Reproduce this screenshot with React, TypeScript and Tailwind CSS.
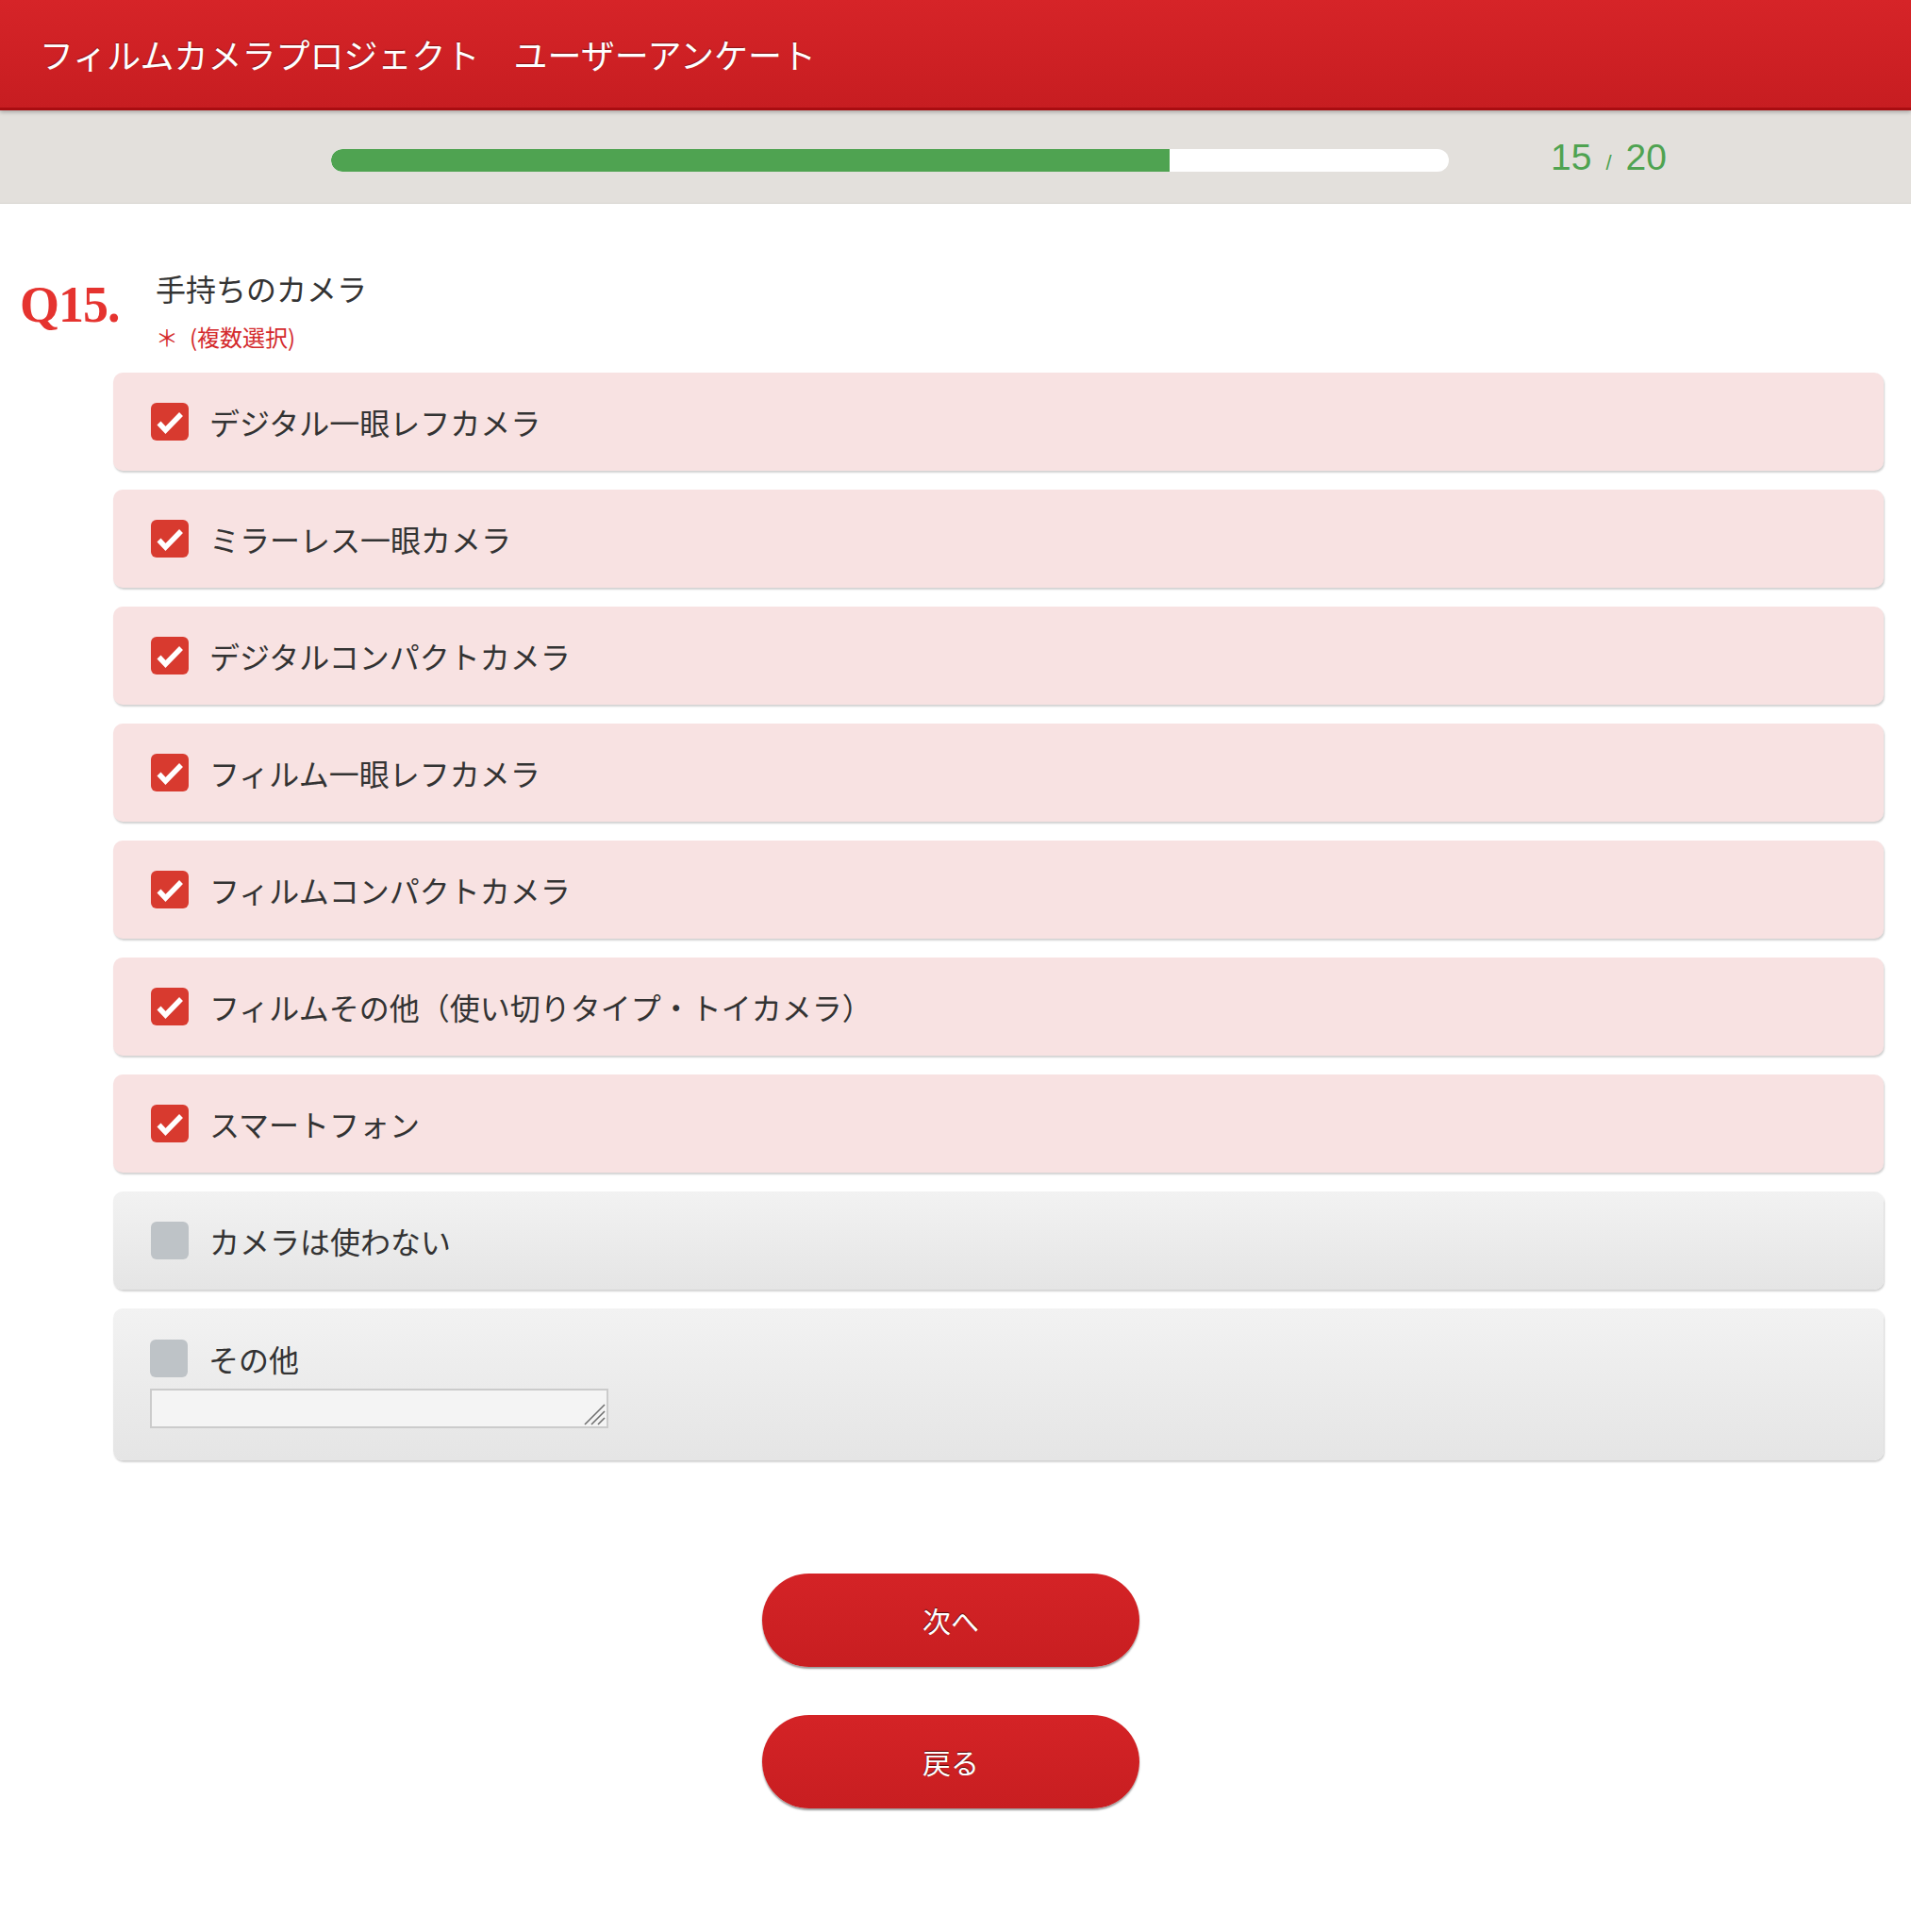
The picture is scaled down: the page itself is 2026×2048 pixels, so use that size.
import React from "react";

const JP = "font-['Noto_Sans_CJK_JP',sans-serif]";

function Check() {
  return (
    <div className="w-[40px] h-[40px] rounded-[6px] bg-[#d83a2f] flex items-center justify-center shrink-0">
      <svg width="40" height="40" viewBox="0 0 40 40">
        <polyline
          points="8.5,21.5 15.5,29 32,12"
          fill="none"
          stroke="#ffffff"
          strokeWidth="5.5"
          strokeLinecap="butt"
          strokeLinejoin="miter"
        />
      </svg>
    </div>
  );
}

function Empty() {
  return <div className="w-[40px] h-[40px] rounded-[6px] bg-[#bec3c7] shrink-0" />;
}

const checked = [
  "デジタル一眼レフカメラ",
  "ミラーレス一眼カメラ",
  "デジタルコンパクトカメラ",
  "フィルム一眼レフカメラ",
  "フィルムコンパクトカメラ",
  "フィルムその他（使い切りタイプ・トイカメラ）",
  "スマートフォン",
];

export default function App() {
  return (
    <div className={`w-[2026px] min-h-[2048px] bg-white ${JP}`}>
      {/* Header */}
      <div className="relative z-10 h-[117px] bg-gradient-to-b from-[#d62428] to-[#c71d21] border-b-[3px] border-[#a90d11] shadow-[0_2px_4px_rgba(0,0,0,0.25)] flex items-center pl-[42px]">
        <h1 className="text-white text-[36px] font-normal [text-shadow:0_-1px_1px_rgba(0,0,0,0.35)] whitespace-pre">
          フィルムカメラプロジェクト　ユーザーアンケート
        </h1>
      </div>

      {/* Progress band */}
      <div className="h-[99px] bg-[#e3e0dc] border-b border-[#d6d3cf] flex items-center pt-[8px] pl-[351px]">
        <div className="w-[1185px] h-[24px] rounded-full bg-white overflow-hidden">
          <div className="h-full bg-[#4fa351] rounded-l-full" style={{ width: `${(15 / 20) * 100}%` }} />
        </div>
        <div className="ml-[108px] flex items-baseline text-[#4fa351] font-['Liberation_Sans',sans-serif] -mt-[8px]">
          <span className="text-[39px] leading-none">15</span>
          <span className="text-[22px] leading-none mx-[15px]">/</span>
          <span className="text-[39px] leading-none">20</span>
        </div>
      </div>

      {/* Question */}
      <div className="flex pl-[21px] pt-[69px]">
        <div className="w-[144px] mt-[11px] text-[54px] leading-[54px] font-bold text-[#e5332f] font-['Liberation_Serif',serif] tracking-[-1px]">
          Q15.
        </div>
        <div className="flex flex-col">
          <div className="text-[32px] leading-[40px] text-[#333333]">手持ちのカメラ</div>
          <div className="mt-[17px] text-[24px] leading-[30px] text-[#d42a2c] flex">
            <span>＊</span>
            <span className="ml-[12px]">(複数選択)</span>
          </div>
        </div>
      </div>

      {/* Options */}
      <div className="mt-[23px] pl-[120px] pr-[29px] flex flex-col gap-[20px]">
        {checked.map((t) => (
          <div
            key={t}
            className="h-[104px] rounded-[10px] bg-[#f8e2e2] shadow-[1px_2px_2px_rgba(0,0,0,0.18)] flex items-center pl-[40px] gap-[22px]"
          >
            <Check />
            <span className="text-[32px] text-[#333333]">{t}</span>
          </div>
        ))}
        <div className="h-[104px] rounded-[10px] bg-gradient-to-b from-[#f2f2f2] to-[#e5e5e5] shadow-[1px_2px_2px_rgba(0,0,0,0.18)] flex items-center pl-[40px] gap-[22px]">
          <Empty />
          <span className="text-[32px] text-[#333333]">カメラは使わない</span>
        </div>
        <div className="rounded-[10px] bg-gradient-to-b from-[#f2f2f2] to-[#e5e5e5] shadow-[1px_2px_2px_rgba(0,0,0,0.18)] flex flex-col pl-[39px] pt-[33px] pb-[34px]">
          <div className="flex items-center gap-[22px] h-[40px]">
            <Empty />
            <span className="text-[32px] leading-[40px] text-[#333333]">その他</span>
          </div>
          <div className="relative mt-[12px] w-[486px] h-[42px] border-2 border-[#cbcbcb] bg-[#f4f4f4]">
            <svg className="absolute right-[1px] bottom-[1px]" width="24" height="24" viewBox="0 0 24 24">
              <line x1="23" y1="2" x2="2" y2="23" stroke="#6f6f6f" strokeWidth="1.6" />
              <line x1="23" y1="9" x2="9" y2="23" stroke="#6f6f6f" strokeWidth="1.6" />
              <line x1="23" y1="16" x2="16" y2="23" stroke="#6f6f6f" strokeWidth="1.6" />
            </svg>
          </div>
        </div>
      </div>

      {/* Buttons */}
      <div className="mt-[120px] flex flex-col items-center gap-[51px] pr-[10px]">
        <button className="w-[400px] h-[99px] rounded-full bg-gradient-to-b from-[#d42326] to-[#c81e21] shadow-[0_2px_2px_rgba(0,0,0,0.4)] text-white text-[30px] [text-shadow:0_-1px_1px_rgba(0,0,0,0.6)]">
          次へ
        </button>
        <button className="w-[400px] h-[99px] rounded-full bg-gradient-to-b from-[#d42326] to-[#c81e21] shadow-[0_2px_2px_rgba(0,0,0,0.4)] text-white text-[30px] [text-shadow:0_-1px_1px_rgba(0,0,0,0.6)]">
          戻る
        </button>
      </div>
    </div>
  );
}
